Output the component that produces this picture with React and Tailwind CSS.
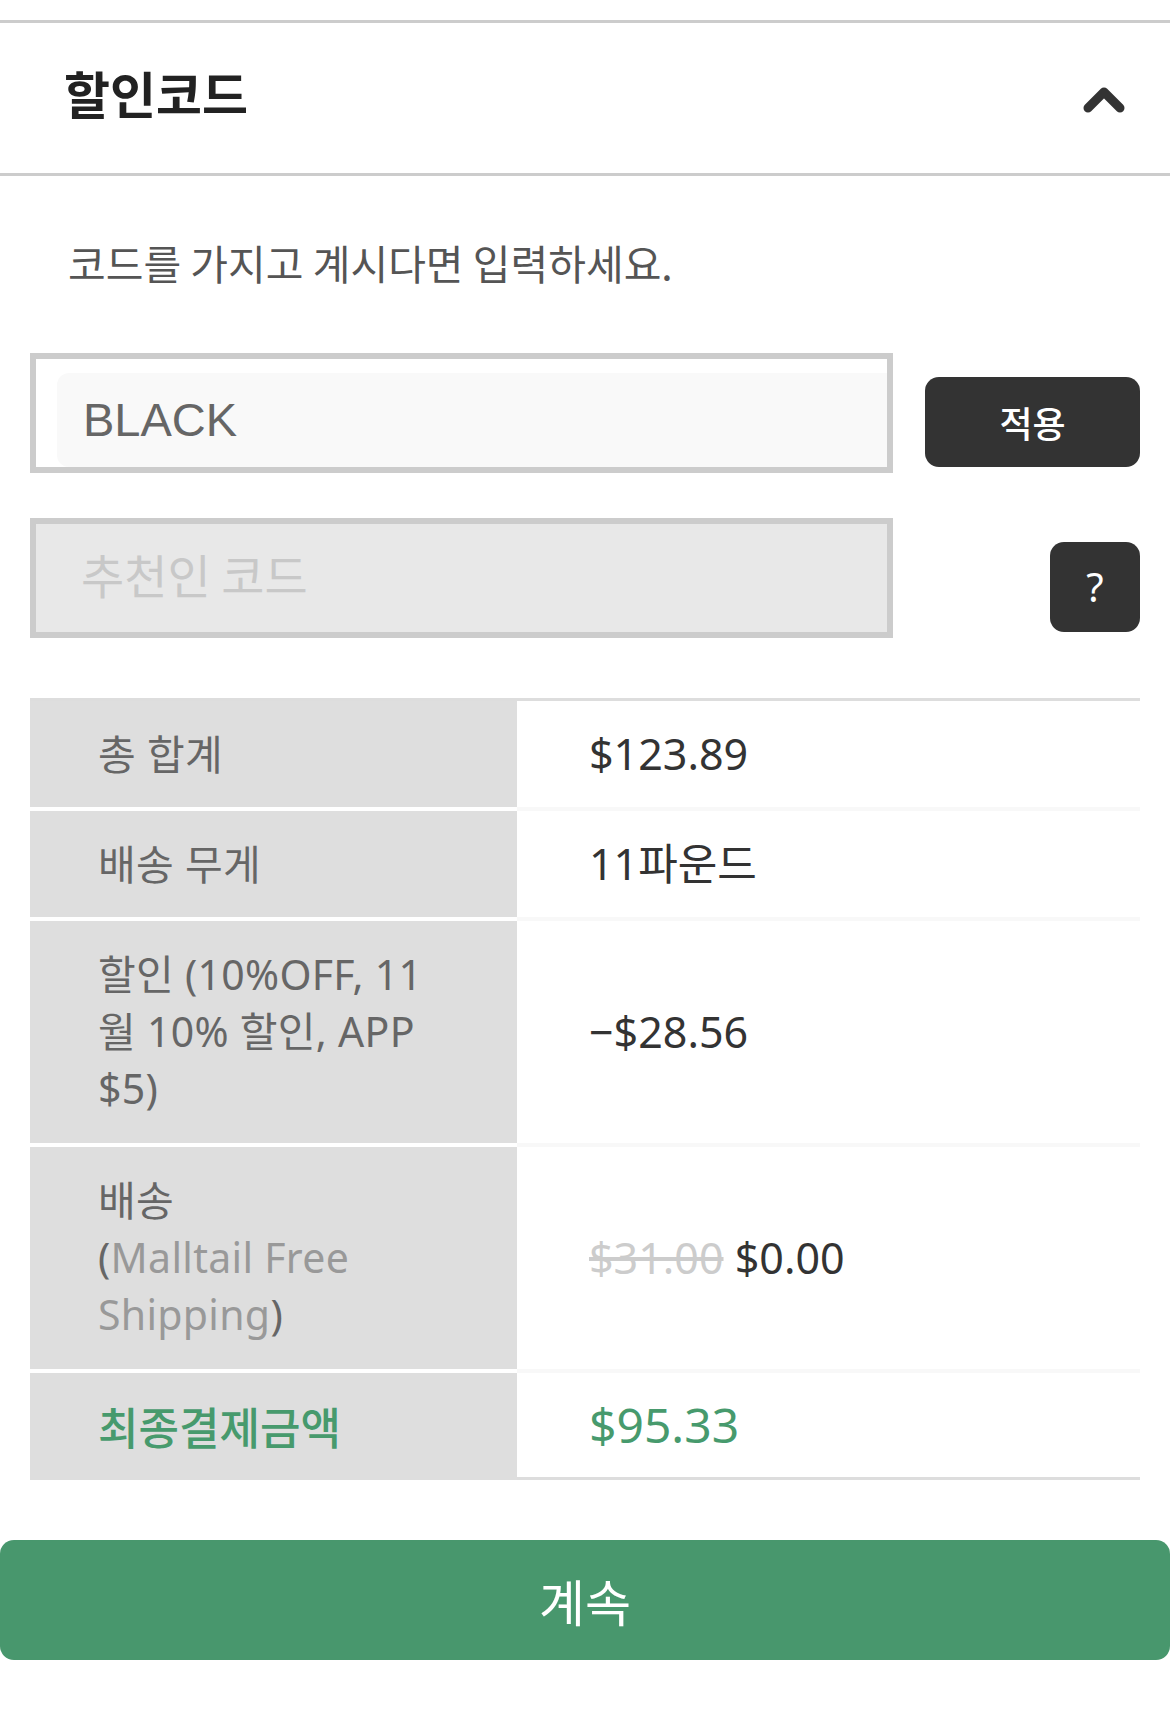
import React from "react";

const KR = { fontFamily: '"Noto Sans CJK KR", "Noto Sans", sans-serif' };
const MIX = { fontFamily: '"Noto Sans", "Noto Sans CJK KR", sans-serif' };

function Row({ lines, value, multi }) {
  return (
    <div className="flex">
      <div
        className={`w-[487px] shrink-0 bg-[#dedede] pl-[68px] pr-[30px] pt-[25px] text-[41px] tracking-[0.3px] text-[#666] border-b-4 border-white ${
          multi ? "pb-[26px]" : "pb-[24px]"
        }`}
        style={MIX}
      >
        {lines.map((l, i) => (
          <div key={i} className="h-[57px] leading-[57px] whitespace-nowrap">
            {l}
          </div>
        ))}
      </div>
      <div
        className="flex-1 flex items-center pl-[72px] bg-white text-[43px] text-[#333] border-b-4 border-[#f8f8f8]"
        style={MIX}
      >
        {value}
      </div>
    </div>
  );
}

export default function App() {
  return (
    <div className="w-[1170px] min-h-[1713px] bg-white pt-[20px]" style={KR}>
      {/* Header */}
      <div className="h-[156px] border-t-[3px] border-b-[3px] border-[#ccc] flex items-center justify-between pl-[64px] pr-[45px]">
        <span className="text-[50px] font-bold text-[#222] leading-none mb-[12px]">할인코드</span>
        <svg width="42" height="28" viewBox="0 0 42 28" className="mt-[2px]">
          <polyline
            points="5,23 21,7 37,23"
            fill="none"
            stroke="#333"
            strokeWidth="9"
            strokeLinecap="round"
            strokeLinejoin="round"
          />
        </svg>
      </div>

      {/* Body */}
      <div className="px-[30px]">
        <p className="pt-[58px] pl-[38px] text-[41px] leading-[56px] text-[#555]">
          코드를 가지고 계시다면 입력하세요.
        </p>

        {/* Coupon input row */}
        <div className="mt-[63px] flex items-start">
          <div className="w-[863px] h-[120px] border-[6px] border-[#ccc] bg-white">
            <div
              className="ml-[21px] mt-[14px] h-[94px] rounded-l-[12px] bg-[#f9f9f9] flex items-center pl-[26px] text-[47px] text-[#666]"
              style={{ fontFamily: '"Liberation Sans", Arial, sans-serif' }}
            >
              BLACK
            </div>
          </div>
          <button className="ml-[32px] mt-[24px] w-[215px] h-[90px] rounded-[14px] bg-[#333] text-white text-[36px] font-medium flex items-center justify-center">
            적용
          </button>
        </div>

        {/* Referral code row */}
        <div className="mt-[45px] flex items-start">
          <div className="w-[863px] h-[120px] border-[6px] border-[#ccc] bg-[#e8e8e8]">
            <div className="ml-[21px] mt-[14px] h-[94px] flex items-center pl-[24px] pb-[22px] text-[47px] text-[#c8c8c8]">
              추천인 코드
            </div>
          </div>
          <button
            className="ml-auto mt-[24px] w-[90px] h-[90px] rounded-[14px] bg-[#333] text-white text-[40px] flex items-center justify-center"
            style={MIX}
          >
            ?
          </button>
        </div>

        {/* Summary table */}
        <div className="mt-[60px] border-t-[3px] border-[#ddd]">
          <Row lines={["총 합계"]} value="$123.89" />
          <Row lines={["배송 무게"]} value="11파운드" />
          <Row multi lines={["할인 (10%OFF, 11", "월 10% 할인, APP", "$5)"]} value="−$28.56" />
          <Row
            multi
            lines={[
              "배송",
              <>
                (<span className="text-[#999]">Malltail Free</span>
              </>,
              <>
                <span className="text-[#999]">Shipping</span>)
              </>,
            ]}
            value={
              <span>
                <span className="line-through text-[#ccc]">$31.00</span> $0.00
              </span>
            }
          />
          <div className="flex">
            <div className="w-[487px] shrink-0 bg-[#dedede] pl-[68px] pt-[25px] pb-[25px] leading-[57px] text-[44px] font-medium text-[#479a6d] whitespace-nowrap">
              최종결제금액
            </div>
            <div
              className="flex-1 flex items-center pl-[72px] bg-white text-[48px] text-[#479a6d] border-b-[3px] border-[#ddd]"
              style={MIX}
            >
              $95.33
            </div>
          </div>
        </div>
      </div>

      {/* Continue button */}
      <button className="mt-[60px] w-[1170px] h-[120px] rounded-[14px] bg-[#48976d] text-white text-[50px] flex items-center justify-center">
        계속
      </button>
    </div>
  );
}
